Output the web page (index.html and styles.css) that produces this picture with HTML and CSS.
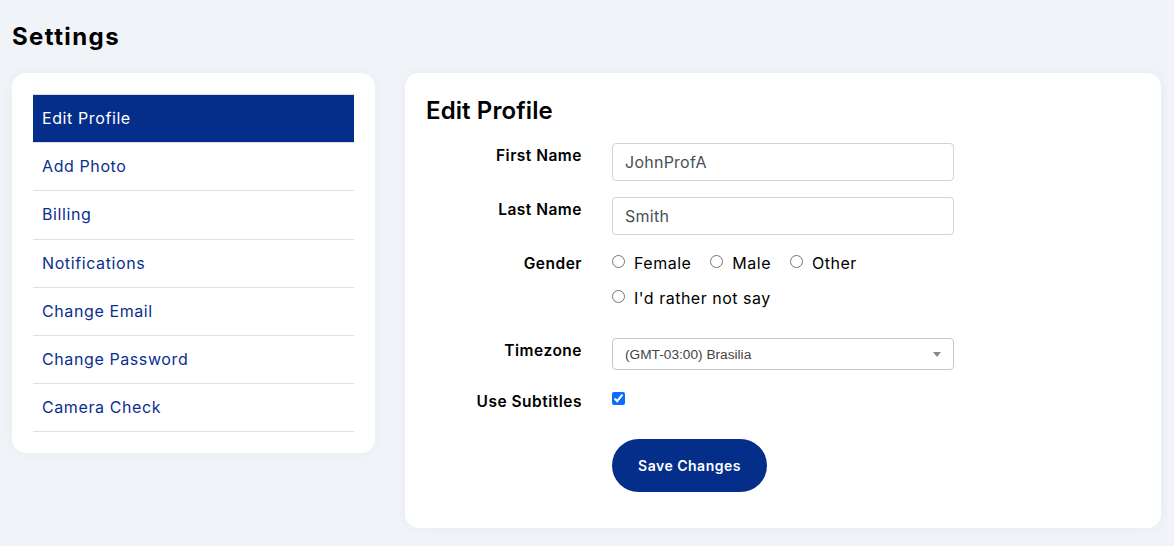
FILE: index.html
```html
<!DOCTYPE html>
<html lang="en">
<head>
<meta charset="utf-8">
<title>Settings</title>
<link rel="stylesheet" href="styles.css">
</head>
<body>
<div class="page">
  <h1 class="page-title">Settings</h1>
  <div class="layout">
    <aside class="card side-card">
      <ul class="menu">
        <li class="menu-item active">Edit Profile</li>
        <li class="menu-item">Add Photo</li>
        <li class="menu-item">Billing</li>
        <li class="menu-item">Notifications</li>
        <li class="menu-item">Change Email</li>
        <li class="menu-item">Change Password</li>
        <li class="menu-item">Camera Check</li>
      </ul>
    </aside>
    <main class="card main-card">
      <h2 class="section-title">Edit Profile</h2>
      <form class="form">
        <div class="row">
          <label class="label">First Name</label>
          <div class="field"><input class="input" type="text" value="JohnProfA"></div>
        </div>
        <div class="row">
          <label class="label">Last Name</label>
          <div class="field"><input class="input" type="text" value="Smith"></div>
        </div>
        <div class="row row-gender">
          <label class="label label-plain">Gender</label>
          <div class="field radios">
            <label class="radio"><input type="radio" name="g"><span>Female</span></label>
            <label class="radio"><input type="radio" name="g"><span>Male</span></label>
            <label class="radio"><input type="radio" name="g"><span>Other</span></label>
            <label class="radio"><input type="radio" name="g"><span>I'd rather not say</span></label>
          </div>
        </div>
        <div class="row row-tz">
          <label class="label label-tz">Timezone</label>
          <div class="field">
            <div class="select">
              <span class="select-text">(GMT-03:00) Brasilia</span>
              <span class="select-arrow"></span>
            </div>
          </div>
        </div>
        <div class="row row-sub">
          <label class="label label-plain">Use Subtitles</label>
          <div class="field"><input class="check" type="checkbox" checked></div>
        </div>
        <div class="row row-btn">
          <span></span>
          <div class="field"><button type="button" class="btn">Save Changes</button></div>
        </div>
      </form>
    </main>
  </div>
</div>
</body>
</html>
```

FILE: styles.css
```css
* { box-sizing: border-box; }
html, body { margin: 0; padding: 0; }
body {
  background: #f0f4f8;
  font-family: Inter, "Open Sans", sans-serif;
  color: #000;
  width: 1174px;
  height: 546px;
  overflow: hidden;
}
.page { padding: 20px 13px 0 12px; }
.page-title {
  margin: 0 0 20px 0;
  font-size: 24px;
  font-weight: 700;
  line-height: 33px;
  letter-spacing: 1.4px;
}
.layout { display: flex; gap: 30px; align-items: flex-start; }
.card {
  background: #fff;
  border-radius: 14px;
  box-shadow: 0 0 12px rgba(30, 50, 90, 0.04);
}
.side-card { width: 363px; padding: 21px 21px 21px 21px; }
.menu { list-style: none; margin: 0; padding: 0; border-top: 1px solid #dcdfe3; }
.menu-item {
  height: 48.2px;
  line-height: 47px;
  padding-left: 9px;
  font-size: 16px;
  letter-spacing: 0.6px;
  color: #0a2f8f;
  border-bottom: 1px solid #dcdfe3;
}
.menu-item.active { background: #042e8a; color: #fff; }
.main-card { flex: 1; padding: 21px 21px 36px 21px; height: 455px; }
.section-title {
  margin: 0 0 16px 0;
  font-size: 24px;
  font-weight: 600;
  line-height: 33px;
  letter-spacing: 0.1px;
}
.form { display: flex; flex-direction: column; }
.row { display: grid; grid-template-columns: 156px 342px; column-gap: 30px; margin-bottom: 16px; }
.label { text-align: right; font-weight: 600; font-size: 15.5px; letter-spacing: 0.5px; padding-top: 3px; line-height: 20px; }
.label-plain { padding-top: 3px; }
.input {
  width: 342px;
  height: 38px;
  border: 1px solid #ced4da;
  border-radius: 4px;
  padding: 0 12px;
  font-family: inherit;
  font-size: 16px;
  letter-spacing: 0.25px;
  color: #495057;
  outline: none;
}
.row-gender { margin-bottom: 28px; }
.radios { display: flex; flex-wrap: wrap; column-gap: 19px; row-gap: 11px; }
.radio { display: flex; align-items: center; font-size: 16px; letter-spacing: 0.5px; height: 24px; color: #000; }
.radio input { margin: 0 9px 0 0; width: 13px; height: 13px; position: relative; top: -2px; }
.radio:nth-child(4) { flex-basis: 100%; }
.select {
  position: relative;
  height: 32px;
  border: 1px solid #c5c8cc;
  border-radius: 4px;
  background: #fff;
  display: flex;
  align-items: center;
  padding-left: 12px;
}
.select-text { font-family: "Liberation Sans", Arial, sans-serif; font-size: 13.7px; color: #444; }
.select-arrow {
  position: absolute;
  right: 12px;
  top: 13px;
  border-left: 4px solid transparent;
  border-right: 4px solid transparent;
  border-top: 5px solid #888;
}
.label-tz { padding-top: 3px; }
.row-tz { margin-bottom: 19px; }
.check { margin: 3px 0 0 0; width: 13px; height: 13px; accent-color: #0a6cff; }
.row-sub { margin-bottom: 27px; }
.btn {
  width: 155px;
  height: 53px;
  border: none;
  border-radius: 27px;
  background: #042e8a;
  color: #fff;
  font-family: inherit;
  font-size: 14px;
  font-weight: 600;
  letter-spacing: 0.5px;
}
```
